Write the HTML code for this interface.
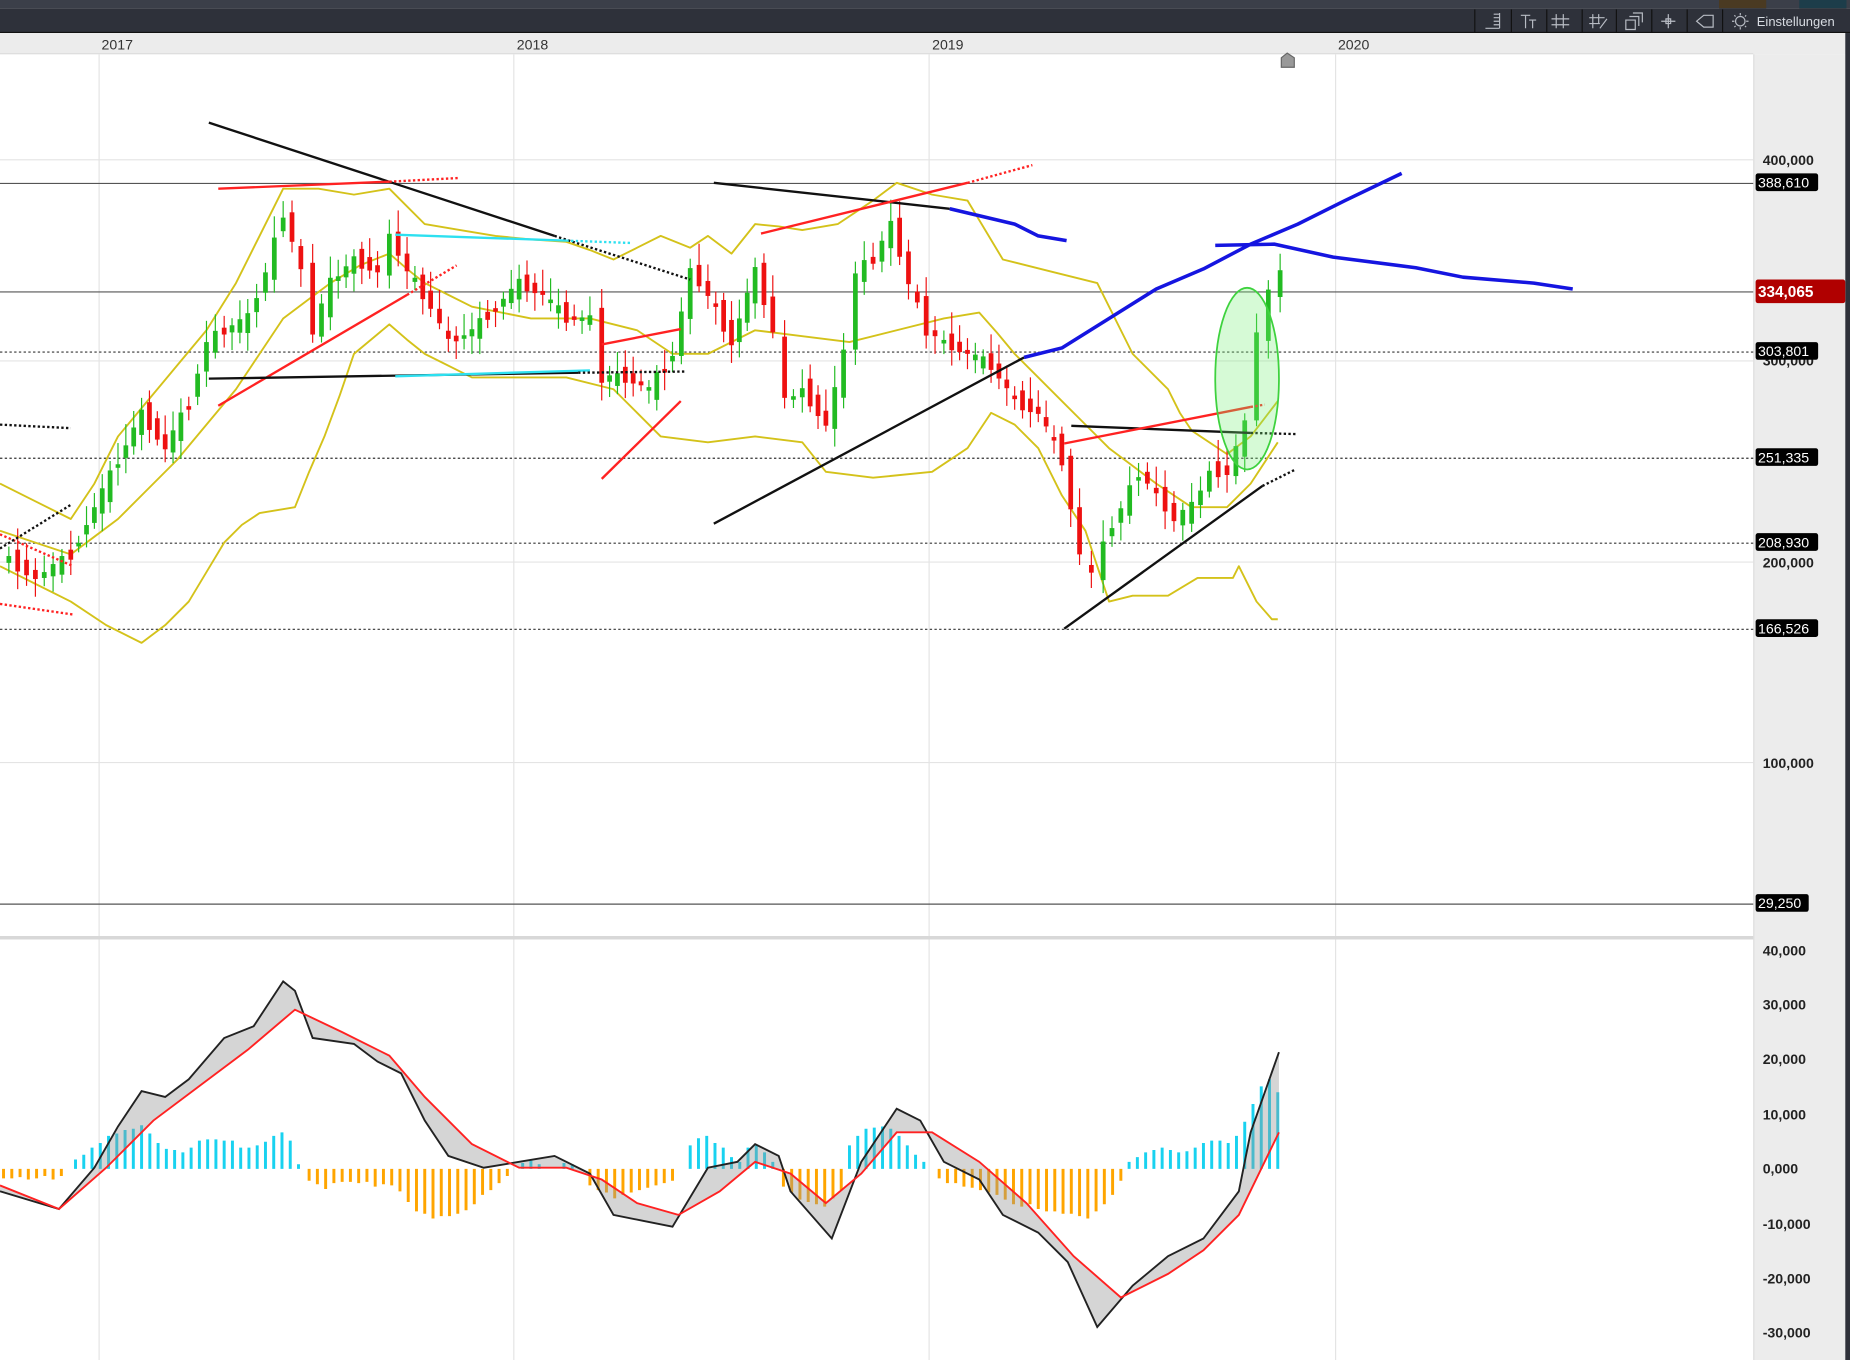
<!DOCTYPE html>
<html><head><meta charset="utf-8"><style>
html,body{margin:0;padding:0;width:1850px;height:1360px;overflow:hidden;background:#fff}
svg{display:block}
text{font-family:"Liberation Sans",sans-serif}
</style></head><body>
<svg width="1850" height="1360" viewBox="0 0 1568 1153" preserveAspectRatio="none" xmlns="http://www.w3.org/2000/svg">
<rect x="0" y="0" width="1568" height="1153" fill="#fff"/>
<rect x="0" y="0" width="1568" height="7" fill="#3b3f49"/>
<rect x="1457" y="0" width="40" height="7" fill="#4a3a22"/>
<rect x="1525" y="0" width="40" height="7" fill="#1d3d4a"/>
<rect x="0" y="7" width="1568" height="21" fill="#2e313a"/>
<line x1="0" y1="27.5" x2="1568" y2="27.5" stroke="#111" stroke-width="1"/>
<g stroke="#111" stroke-width="1">
<line x1="1250" y1="8" x2="1250" y2="28"/><line x1="1281" y1="8" x2="1281" y2="28"/><line x1="1311" y1="8" x2="1311" y2="28"/><line x1="1341" y1="8" x2="1341" y2="28"/><line x1="1370" y1="8" x2="1370" y2="28"/><line x1="1400" y1="8" x2="1400" y2="28"/><line x1="1430" y1="8" x2="1430" y2="28"/><line x1="1460" y1="8" x2="1460" y2="28"/>
</g>
<g stroke="#b8bcc4" fill="none" stroke-width="1">
<path d="M1259 24H1271M1266 12H1271M1266 15H1271M1266 18H1271M1266 21H1271M1271 11V24"/>
<path d="M1289 13H1297M1293 13V24M1296 17H1302M1299 17V24"/>
<path d="M1319 12V24M1325 12V24M1315 16H1330M1315 21H1330"/>
<path d="M1350 12V24M1355 12V20M1347 15H1360M1347 20H1356M1356 24L1362 16"/>
<path d="M1378 17H1386V25H1378ZM1381 14H1389V22M1384 11H1392V19"/>
<path d="M1408 18H1420M1414 12V24M1412 16H1416V20H1412Z"/>
<path d="M1438 18L1444 13H1452V23H1444Z"/>
<circle cx="1475" cy="18" r="4"/><path d="M1475 11V13M1475 23V25M1468 18H1470M1480 18H1482M1470 13L1471 14M1480 13L1479 14M1470 23L1471 22M1480 23L1479 22"/>
</g>
<text x="1489" y="22" font-size="11" fill="#d8dce2">Einstellungen</text>
<rect x="0" y="28" width="1568" height="18" fill="#ececec"/>
<line x1="0" y1="45.5" x2="1486" y2="45.5" stroke="#ddd"/>
<text x="86" y="42" font-size="12" fill="#333">2017</text>
<text x="438" y="42" font-size="12" fill="#333">2018</text>
<text x="790" y="42" font-size="12" fill="#333">2019</text>
<text x="1134" y="42" font-size="12" fill="#333">2020</text>
<rect x="1486" y="46" width="78" height="1107" fill="#ececec"/>
<line x1="1486.5" y1="46" x2="1486.5" y2="1153" stroke="#ddd"/>
<rect x="1564" y="28" width="4" height="1125" fill="#2e313a"/>
<g stroke="#e4e4e4" stroke-width="1">
<line x1="84" y1="46" x2="84" y2="1153"/><line x1="435.5" y1="46" x2="435.5" y2="1153"/><line x1="787.5" y1="46" x2="787.5" y2="1153"/><line x1="1132" y1="46" x2="1132" y2="1153"/>
<line x1="0" y1="135.5" x2="1486" y2="135.5"/><line x1="0" y1="306" x2="1486" y2="306"/><line x1="0" y1="476.5" x2="1486" y2="476.5"/><line x1="0" y1="646.5" x2="1486" y2="646.5"/>
</g>
<line x1="0" y1="795" x2="1486" y2="795" stroke="#d8d8d8" stroke-width="3"/>
<g stroke="#555" stroke-width="1">
<line x1="0" y1="155.5" x2="1486" y2="155.5"/><line x1="0" y1="247.5" x2="1486" y2="247.5"/><line x1="0" y1="766.5" x2="1486" y2="766.5"/>
</g>
<g stroke="#333" stroke-width="1" stroke-dasharray="2,2">
<line x1="0" y1="298.5" x2="1486" y2="298.5"/><line x1="0" y1="388.5" x2="1486" y2="388.5"/><line x1="0" y1="460.5" x2="1486" y2="460.5"/><line x1="0" y1="533.5" x2="1486" y2="533.5"/>
</g>
<g font-size="12" font-weight="bold" fill="#222">
<text x="1494" y="140">400,000</text><text x="1494" y="310">300,000</text><text x="1494" y="481">200,000</text><text x="1494" y="651">100,000</text>
<text x="1494" y="810">40,000</text><text x="1494" y="856">30,000</text><text x="1494" y="902">20,000</text><text x="1494" y="949">10,000</text><text x="1494" y="995">0,000</text><text x="1494" y="1042">-10,000</text><text x="1494" y="1088">-20,000</text><text x="1494" y="1134">-30,000</text>
</g>
<g font-size="12" fill="#fff">
<rect x="1488" y="147" width="53" height="15" rx="2" fill="#000"/><text x="1490" y="159">388,610</text>
<rect x="1488" y="290" width="53" height="15" rx="2" fill="#000"/><text x="1490" y="302">303,801</text>
<rect x="1488" y="380" width="53" height="15" rx="2" fill="#000"/><text x="1490" y="392">251,335</text>
<rect x="1488" y="452" width="53" height="15" rx="2" fill="#000"/><text x="1490" y="464">208,930</text>
<rect x="1488" y="525" width="53" height="15" rx="2" fill="#000"/><text x="1490" y="537">166,526</text>
<rect x="1488" y="758" width="45" height="15" rx="2" fill="#000"/><text x="1490" y="770">29,250</text>
<rect x="1488" y="237" width="76" height="20" rx="2" fill="#b00000"/><text x="1490" y="252" font-weight="bold" font-size="13">334,065</text>
</g>
<path d="M1086 57V49L1091 45L1097 49V57Z" fill="#999" stroke="#666"/>
<g fill="none" stroke="#d4c21a" stroke-width="1.6" stroke-linejoin="round">
<polyline points="0,410 30,425 60,440 80,410 100,370 125,340 150,310 175,280 200,240 220,200 240,160 270,160 300,165 330,160 345,175 360,190 390,195 420,200 450,203 480,205 500,212 520,220 540,210 560,200 585,210 600,200 620,215 640,190 660,192 680,195 710,190 725,180 740,170 760,155 790,165 820,170 835,195 850,220 890,230 930,240 945,270 960,300 990,330 1000,350 1010,365 1040,385 1060,370 1083,340"/>
<polyline points="0,450 30,460 60,470 80,455 100,440 125,415 150,390 175,360 200,330 220,300 240,270 260,255 280,240 305,225 330,215 345,228 360,240 380,250 400,260 450,270 500,270 540,280 570,300 600,300 640,280 680,285 720,290 760,280 800,270 830,265 845,282 860,300 880,320 900,340 920,360 940,380 960,395 980,410 1010,430 1040,430 1060,410 1083,375"/>
<polyline points="0,480 30,495 60,510 90,530 120,545 140,530 160,510 175,485 190,460 205,445 220,435 250,430 262,400 275,370 288,335 300,300 330,275 345,288 360,300 400,320 480,320 520,330 540,350 560,370 600,375 640,370 680,375 700,400 740,405 790,400 820,380 840,350 860,360 880,380 900,420 920,450 940,510 960,505 990,505 1015,490 1045,490 1050,480 1065,510 1078,525 1083,525"/>
</g>
<g id="candles" stroke-width="1"></g>
<g fill="none" stroke-width="2">
<line x1="177" y1="104" x2="470" y2="200" stroke="#111"/>
<line x1="470" y1="200" x2="585" y2="237" stroke="#111" stroke-dasharray="2,2"/>
<line x1="185" y1="160" x2="330" y2="154" stroke="#f22"/>
<line x1="330" y1="154" x2="388" y2="151" stroke="#f22" stroke-dasharray="2,2"/>
<line x1="185" y1="344" x2="345" y2="250" stroke="#f22"/>
<line x1="345" y1="250" x2="387" y2="225" stroke="#f22" stroke-dasharray="2,2"/>
<line x1="177" y1="321" x2="490" y2="316" stroke="#111"/>
<line x1="335" y1="319" x2="500" y2="314" stroke="#2de0f0"/>
<line x1="335" y1="199" x2="480" y2="204" stroke="#2de0f0"/>
<line x1="480" y1="204" x2="535" y2="206" stroke="#2de0f0" stroke-dasharray="2,2"/>
<line x1="490" y1="316" x2="580" y2="315" stroke="#111" stroke-dasharray="2,2"/>
<line x1="510" y1="292" x2="577" y2="279" stroke="#f22"/>
<line x1="510" y1="406" x2="577" y2="340" stroke="#f22"/>
<line x1="0" y1="360" x2="60" y2="363" stroke="#111" stroke-dasharray="2,2"/>
<line x1="0" y1="453" x2="62" y2="480" stroke="#f22" stroke-dasharray="2,2"/>
<line x1="0" y1="465" x2="60" y2="428" stroke="#111" stroke-dasharray="2,2"/>
<line x1="0" y1="512" x2="62" y2="521" stroke="#f22" stroke-dasharray="2,2"/>
<line x1="605" y1="155" x2="805" y2="177" stroke="#111"/>
<line x1="645" y1="198" x2="820" y2="155" stroke="#f22"/>
<line x1="820" y1="155" x2="875" y2="140" stroke="#f22" stroke-dasharray="2,2"/>
<line x1="605" y1="444" x2="868" y2="303" stroke="#111"/>
<line x1="908" y1="361" x2="1060" y2="367" stroke="#111"/>
<line x1="1060" y1="367" x2="1098" y2="368" stroke="#111" stroke-dasharray="2,2"/>
<line x1="902" y1="376" x2="1060" y2="345" stroke="#f22"/>
<line x1="1060" y1="345" x2="1072" y2="343" stroke="#f22" stroke-dasharray="2,2"/>
<line x1="902" y1="533" x2="1070" y2="412" stroke="#111"/>
<line x1="1070" y1="412" x2="1098" y2="398" stroke="#111" stroke-dasharray="2,2"/>
</g>
<ellipse cx="1057" cy="321" rx="27" ry="77" fill="rgba(120,240,120,0.3)" stroke="#3ed23e" stroke-width="1.5"/>
<g fill="none" stroke="#1515e0" stroke-width="3" stroke-linejoin="round">
<polyline points="805,177 860,190 880,200 904,204"/>
<polyline points="868,303 900,295 940,270 980,245 1020,228 1060,207 1100,190 1140,170 1188,147"/>
<polyline points="1030,208 1080,207 1130,218 1200,227 1240,235 1300,240 1333,245"/>
</g>
<path stroke="#ffa500" stroke-width="2.5" d="M3 991v8M10 991v8M17 991v7M24 991v9M31 991v8M38 991v6M45 991v9M52 991v6M262 991v10M269 991v13M276 991v17M283 991v12M290 991v11M297 991v11M304 991v12M311 991v11M318 991v15M325 991v13M332 991v14M339 991v19M346 991v28M353 991v36M360 991v38M367 991v42M374 991v40M381 991v40M388 991v38M395 991v35M402 991v30M409 991v22M416 991v18M423 991v12M430 991v6M500 991v14M507 991v18M514 991v20M521 991v25M528 991v22M535 991v20M542 991v18M549 991v16M556 991v14M563 991v12M570 991v10M664 991v15M671 991v20M678 991v26M685 991v28M692 991v30M699 991v32M706 991v25M713 991v18M796 991v8M803 991v12M810 991v12M817 991v15M824 991v16M831 991v18M838 991v20M845 991v22M852 991v26M859 991v30M866 991v32M873 991v30M880 991v34M887 991v36M894 991v36M901 991v38M908 991v38M915 991v40M922 991v42M929 991v36M936 991v30M943 991v22M950 991v10"/>
<path stroke="#18d2f0" stroke-width="2.5" d="M64 991v-8M71 991v-12M78 991v-18M85 991v-22M92 991v-28M99 991v-30M106 991v-33M113 991v-34M120 991v-37M127 991v-30M134 991v-22M141 991v-17M148 991v-16M155 991v-14M162 991v-18M169 991v-24M176 991v-25M183 991v-25M190 991v-24M197 991v-24M204 991v-18M211 991v-18M218 991v-20M225 991v-23M232 991v-28M239 991v-31M246 991v-24M253 991v-4M443 991v-5M450 991v-7M457 991v-4M478 991v-5M485 991v-4M585 991v-20M592 991v-26M599 991v-28M606 991v-22M613 991v-18M620 991v-10M627 991v-6M634 991v-18M641 991v-20M648 991v-14M655 991v-6M720 991v-20M727 991v-28M734 991v-34M741 991v-35M748 991v-36M755 991v-34M762 991v-28M769 991v-20M776 991v-12M783 991v-6M957 991v-6M964 991v-10M971 991v-14M978 991v-16M985 991v-18M992 991v-16M999 991v-14M1006 991v-15M1013 991v-18M1020 991v-22M1027 991v-24M1034 991v-24M1041 991v-22M1048 991v-28M1055 991v-40M1062 991v-55M1069 991v-70M1076 991v-76M1083 991v-65"/>
<path fill="rgba(150,150,150,0.4)" d="M0,1010 50,1025 80,990 100,955 120,925 140,930 160,915 190,880 215,870 240,832 250,840 265,880 300,885 320,900 340,910 360,950 380,980 410,990 440,985 470,980 500,995 520,1030 545,1035 570,1040 600,990 625,985 640,970 660,980 670,1010 705,1050 730,985 760,940 780,950 800,985 830,1000 850,1030 880,1045 905,1070 930,1125 960,1090 990,1065 1020,1050 1050,1010 1060,960 1084,892 L1084,960 1050,1030 1020,1060 990,1080 950,1100 910,1065 870,1020 830,985 790,960 760,960 730,995 700,1020 670,995 640,985 610,1010 575,1030 540,1020 510,1000 480,990 440,990 400,970 360,930 330,895 290,875 250,856 210,890 170,920 130,950 90,990 50,1025 0,1005Z"/>
<polyline fill="none" stroke="#222" stroke-width="1.6" points="0,1010 50,1025 80,990 100,955 120,925 140,930 160,915 190,880 215,870 240,832 250,840 265,880 300,885 320,900 340,910 360,950 380,980 410,990 440,985 470,980 500,995 520,1030 545,1035 570,1040 600,990 625,985 640,970 660,980 670,1010 705,1050 730,985 760,940 780,950 800,985 830,1000 850,1030 880,1045 905,1070 930,1125 960,1090 990,1065 1020,1050 1050,1010 1060,960 1084,892"/>
<polyline fill="none" stroke="#f22" stroke-width="1.6" points="0,1005 50,1025 90,990 130,950 170,920 210,890 250,856 290,875 330,895 360,930 400,970 440,990 480,990 510,1000 540,1020 575,1030 610,1010 640,985 670,995 700,1020 730,995 760,960 790,960 830,985 870,1020 910,1065 950,1100 990,1080 1020,1060 1050,1030 1084,960"/>
</svg>
<script>
(function(){
var a=[[0,470],[30,490],[60,470],[80,430],[100,390],[120,350],[140,380],[160,340],[175,290],[190,280],[210,270],[225,230],[240,180],[255,230],[265,280],[280,240],[300,220],[320,230],[330,200],[345,230],[365,260],[380,290],[400,280],[420,260],[440,240],[460,250],[480,270],[500,270],[510,320],[530,320],[550,330],[570,300],[585,230],[600,250],[620,290],[640,230],[655,280],[665,340],[680,330],[700,360],[715,300],[725,230],[740,220],[755,190],[770,240],[785,280],[800,290],[820,300],[840,310],[860,340],[880,350],[900,390],[915,470],[925,490],[935,460],[950,430],[965,400],[980,420],[995,440],[1010,430],[1025,400],[1040,400],[1055,360],[1065,280],[1075,250],[1085,230]];
var g=document.getElementById('candles'),s='';
for(var i=1;i<a.length;i++){var x0=a[i-1][0],y0=a[i-1][1],x1=a[i][0],y1=a[i][1];var n=Math.max(1,Math.round((x1-x0)/7));
for(var k=1;k<=n;k++){var x=x0+(x1-x0)*k/n,o=y0+(y1-y0)*(k-1)/n,c=y0+(y1-y0)*k/n;var j=(((i*7+k*13)%11)-5)*1.8;o+=j;c-=j*0.5;
var up=c<o,col=up?'#22bb22':'#ee1111',t=Math.min(o,c),b=Math.max(o,c);if(b-t<3)b=t+3;
var w1=6+((i*3+k*5)%7)*2,w2=5+((i*5+k*3)%6)*2;
s+='<line x1="'+x+'" x2="'+x+'" y1="'+(t-w1)+'" y2="'+(b+w2)+'" stroke="'+col+'"/><rect x="'+(x-2)+'" y="'+t+'" width="4" height="'+(b-t)+'" fill="'+col+'"/>';}}
g.innerHTML=s;})();
</script>
</body></html>
